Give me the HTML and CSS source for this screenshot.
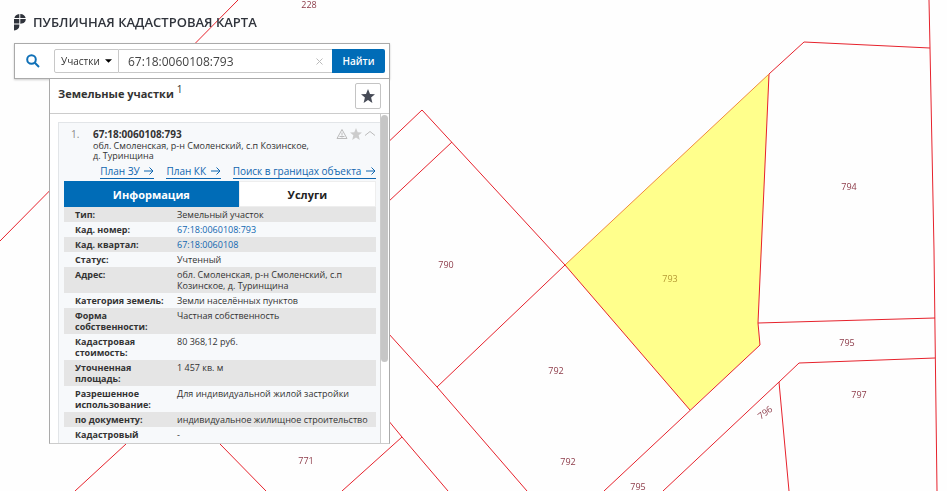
FILE: index.html
```html
<!DOCTYPE html>
<html lang="ru">
<head>
<meta charset="utf-8">
<title>Публичная кадастровая карта</title>
<meta name="viewport" content="width=device-width, initial-scale=1">
<link rel="stylesheet" href="styles.css">
</head>
<body>
<svg class="map" viewBox="0 0 947 491" preserveAspectRatio="xMinYMin slice" role="img" aria-label="Карта участков">
  <polygon class="parcel" points="565,265 769,74 758,323 760,345 690,410"/>
  <g class="borders">
    <path d="M238 0L0 241"/>
    <path d="M340 188L422 110L565 265L690 410"/>
    <path d="M340 247L452 142"/>
    <path d="M340 280L437 387L527 491"/>
    <path d="M437 387L565 265"/>
    <path d="M340 362L402 437L448 491"/>
    <path d="M402 437L342 491"/>
    <path d="M126 444L75 491M220 444L266 491"/>
    <path d="M769 74L804 42L930 48"/>
    <path d="M929 0L930 48L934 250L937 491"/>
    <path d="M769 74L758 323L760 345L604 491"/>
    <path d="M758 323L935 318"/>
    <path d="M663 491L779 382L799 363L935 358"/>
    <path d="M779 382L789 491"/>
  </g>
  <path class="selected-edge" d="M565 265L769 74"/>
  <g class="labels">
    <text x="309" y="8">228</text>
    <text x="446" y="268">790</text>
    <text x="556" y="374">792</text>
    <text x="568" y="465">792</text>
    <text x="638" y="490">795</text>
    <text x="306" y="464">771</text>
    <text x="849" y="190">794</text>
    <text x="847" y="346">795</text>
    <text x="859" y="398">797</text>
    <text transform="translate(767 415) rotate(-37)">796</text>
    <text class="selected-label" x="670" y="282">793</text>
  </g>
</svg>

<main class="sidebar">
  <header class="brand">
    <svg class="logo" viewBox="0 0 12 17" aria-hidden="true">
      <path d="M5.300 0v4H.4C.8 1.800 2.700.2 5.300 0zM6.300 0c3 .1 4.900 1.600 5.300 4H6.300zM0 5h5.300v4.500H0zM6.300 5h5.500c0 2.700-1.700 4.600-5.500 4.700zM0 10.500h5.300V12c0 2.500-2 4.300-5.300 4.600z"/>
    </svg>
    <h1>ПУБЛИЧНАЯ КАДАСТРОВАЯ КАРТА</h1>
  </header>

  <form class="search">
    <svg class="search-icon" viewBox="0 0 14 14" aria-hidden="true"><circle cx="5.500" cy="5.500" r="4.300"/><path d="M8.800 8.800L13 13"/></svg>
    <div class="search-group">
      <div class="kind">
        <select aria-label="Тип объекта"><option>Участки</option></select>
        <svg viewBox="0 0 8 4" aria-hidden="true"><path d="M0 0h8L4 4z"/></svg>
      </div>
      <div class="query">
        <input type="text" aria-label="Кадастровый номер" value="67:18:0060108:793">
        <button type="button" class="clear" aria-label="Очистить"><svg viewBox="0 0 7 7" aria-hidden="true"><path d="M.5 .5l6 6M6.500 .5l-6 6"/></svg></button>
      </div>
      <button type="submit" class="submit">Найти</button>
    </div>
  </form>

  <section class="results">
    <div class="results-head">
      <h2>Земельные участки <sup>1</sup></h2>
      <button type="button" class="favorites" aria-label="Избранное"><svg viewBox="0 0 14 14" aria-hidden="true"><path d="M7 0l2 4.900 5 .3-3.900 3.300L11.400 14 7 11 2.600 14l1.300-5.500L0 5.200l5-.3z"/></svg></button>
    </div>
    <div class="results-body">
      <article class="card">
        <div class="card-head">
          <span class="index">1.</span>
          <div class="card-title">
            <h3>67:18:0060108:793</h3>
            <p>обл. Смоленская, р-н Смоленский, с.п Козинское,<br>д. Туринщина</p>
          </div>
          <div class="card-icons">
            <svg viewBox="0 0 12 11" aria-hidden="true"><path class="stroke" d="M6 1L11 10H1zM6 4v3M6 8v1M3.500 8h5"/></svg>
            <svg viewBox="0 0 14 14" aria-hidden="true"><path d="M7 0l2 4.900 5 .3-3.900 3.300L11.400 14 7 11 2.600 14l1.300-5.500L0 5.200l5-.3z"/></svg>
            <svg viewBox="0 0 12 11" aria-hidden="true"><path class="stroke" d="M1 7l5-4 5 4"/></svg>
          </div>
        </div>
        <nav class="links">
          <a href="#zu">План ЗУ <svg viewBox="0 0 10 8" aria-hidden="true"><path d="M0 4h9M5.500 .5L9 4 5.500 7.500"/></svg></a>
          <a href="#kk">План КК <svg viewBox="0 0 10 8" aria-hidden="true"><path d="M0 4h9M5.500 .5L9 4 5.500 7.500"/></svg></a>
          <a href="#bounds">Поиск в границах объекта <svg viewBox="0 0 10 8" aria-hidden="true"><path d="M0 4h9M5.500 .5L9 4 5.500 7.500"/></svg></a>
        </nav>
        <div class="tabs">
          <button type="button" class="tab active">Информация</button>
          <button type="button" class="tab">Услуги</button>
        </div>
        <table>
          <tbody>
          <tr><th scope="row">Тип:</th><td>Земельный участок</td></tr>
          <tr><th scope="row">Кад. номер:</th><td><a href="#parcel">67:18:0060108:793</a></td></tr>
          <tr><th scope="row">Кад. квартал:</th><td><a href="#block">67:18:0060108</a></td></tr>
          <tr><th scope="row">Статус:</th><td>Учтенный</td></tr>
          <tr><th scope="row">Адрес:</th><td>обл. Смоленская, р-н Смоленский, с.п<br>Козинское, д. Туринщина</td></tr>
          <tr><th scope="row">Категория земель:</th><td>Земли населённых пунктов</td></tr>
          <tr><th scope="row">Форма<br>собственности:</th><td>Частная собственность</td></tr>
          <tr><th scope="row">Кадастровая<br>стоимость:</th><td>80 368,12 руб.</td></tr>
          <tr><th scope="row">Уточненная<br>площадь:</th><td>1 457 кв. м</td></tr>
          <tr><th scope="row">Разрешенное<br>использование:</th><td>Для индивидуальной жилой застройки</td></tr>
          <tr><th scope="row">по документу:</th><td>индивидуальное жилищное строительство</td></tr>
          <tr><th scope="row">Кадастровый<br>инженер:</th><td>-</td></tr>
          </tbody>
        </table>
      </article>
      <div class="scrollbar"><div class="thumb"></div></div>
    </div>
  </section>
</main>
</body>
</html>
```
FILE: styles.css
```css
* { box-sizing: border-box; }

body {
  margin: 0;
  background: #fefefe;
  color: #333;
  font-family: "Open Sans", "Noto Sans", sans-serif;
  font-size: 9px;
  overflow: hidden;
}

h1, h2, h3, p { margin: 0; }
button, input, select { font-family: inherit; color: inherit; }
a { color: #0f66b0; text-decoration: none; }

.map {
  position: fixed;
  inset: 0;
  width: 100%;
  height: 100%;
}
.parcel { fill: #ffff8c; }
.borders, .selected-edge { fill: none; stroke: #e6222c; stroke-width: 1; }
.selected-edge { stroke: #f08a3c; }
.labels { fill: #8c3a48; font-size: 9px; text-anchor: middle; }
.selected-label { fill: #b59a35; }

.sidebar {
  position: relative;
  display: flex;
  flex-direction: column;
  width: min(390px, 100%);
  height: 100vh;
  padding: 13px 0 47px 14px;
}

.brand {
  display: flex;
  align-items: center;
  gap: 7px;
  height: 18px;
  margin-bottom: 12px;
}
.logo { width: 12px; height: 17px; fill: #30343c; }
h1 {
  font-size: 13px;
  font-weight: 600;
  line-height: 20px;
  color: #30343c;
}

.search {
  display: flex;
  align-items: center;
  gap: 14px;
  padding: 5px 4px 5px 11px;
  background: #fff;
  border: 1px solid #aaa;
  box-shadow: 0 1px 2px #ccc;
}
.search-icon { flex: none; width: 14px; height: 14px; fill: none; stroke: #0f70b7; stroke-width: 2; }
.search-group { display: flex; flex: 1; height: 24px; }
.kind {
  display: flex;
  align-items: center;
  gap: 3px;
  width: 65px;
  padding: 0 6px;
  border: 1px solid #c8c8c8;
  border-radius: 2px 0 0 2px;
}
.kind select {
  flex: 1;
  min-width: 0;
  padding: 0;
  border: 0;
  background: none;
  appearance: none;
  font-size: 10px;
}
.kind svg { width: 7px; height: 4px; }
.query {
  display: flex;
  align-items: center;
  flex: 1;
  padding: 0 9px;
  border: solid #c8c8c8;
  border-width: 1px 0;
}
.query input {
  flex: 1;
  min-width: 0;
  padding: 0;
  border: 0;
  background: none;
  color: #444;
  font-size: 12px;
}
.clear { display: flex; padding: 0; border: 0; background: none; }
.clear svg { width: 7px; height: 7px; stroke: #bbb; }
.submit {
  width: 53px;
  padding: 0;
  border: 0;
  border-radius: 0 2px 2px 0;
  background: #006cb7;
  color: #fff;
  font-size: 10px;
  font-weight: 600;
}

.results {
  display: flex;
  flex-direction: column;
  flex: 1;
  min-height: 0;
  margin-left: 35px;
  background: #fff;
  border: 1px solid #aaa;
  border-top: 0;
  border-bottom-color: #ccc;
}
.results-head {
  display: flex;
  justify-content: space-between;
  align-items: flex-start;
  padding: 4px 8px;
  border-bottom: 1px solid #ccc;
}
h2 { font-size: 11px; font-weight: 700; line-height: 22px; }
sup { font-size: 10px; font-weight: 400; line-height: 0; }
.favorites {
  display: flex;
  align-items: center;
  justify-content: center;
  width: 26px;
  height: 26px;
  padding: 0;
  border: 1px solid #c4c4c4;
  border-radius: 2px;
  background: #fff;
}
.favorites svg { width: 14px; height: 14px; fill: #474b57; }

.results-body {
  display: flex;
  flex: 1;
  min-height: 0;
  padding-left: 8px;
  overflow: hidden;
}
.card {
  flex: 1;
  align-self: flex-start;
  margin-top: 8px;
  padding: 5px 4px 4px 5px;
  border: 1px solid #e2e5e8;
  border-right: 0;
  background: #f7f9fb;
}
.scrollbar { width: 9px; border-left: 1px solid #ccc; }
.thumb { width: 7px; height: 75%; margin-top: 1px; border-radius: 4px; background: #c6c6c6; }

.card-head { display: flex; padding-left: 7px; }
.index { width: 22px; font-size: 10px; line-height: 13px; color: #888; }
.card-title { flex: 1; }
h3 { font-size: 10px; font-weight: 700; line-height: 13px; }
.card-title p { line-height: 10px; }
.card-icons { display: flex; gap: 2px; }
.card-icons svg { width: 12px; height: 12px; fill: #ccc; }
.card-icons .stroke { fill: none; stroke: #bbb; stroke-width: 1; }

.links {
  display: flex;
  justify-content: flex-end;
  gap: 12px;
  margin: 4px 0 2px;
  font-size: 10px;
  line-height: 13px;
}
.links a { border-bottom: 1px solid #0f66b0; white-space: nowrap; }
.links svg { width: 10px; height: 8px; margin-left: 2px; fill: none; stroke: #0f66b0; }

.tabs { display: flex; }
.tab {
  flex: 1;
  height: 26px;
  padding: 0;
  border: 1px solid #eee;
  background: #fff;
  color: #222;
  font-size: 11px;
  font-weight: 700;
}
.tab.active { flex: none; width: 56%; border: 0; background: #006cb7; color: #fff; }

table { width: 100%; border-collapse: collapse; }
th, td { padding: 2px 0; line-height: 11px; text-align: left; vertical-align: top; }
th { width: 113px; padding-left: 11px; font-weight: 700; }
tr:nth-child(odd) { background: #e5e5e5; }
```
